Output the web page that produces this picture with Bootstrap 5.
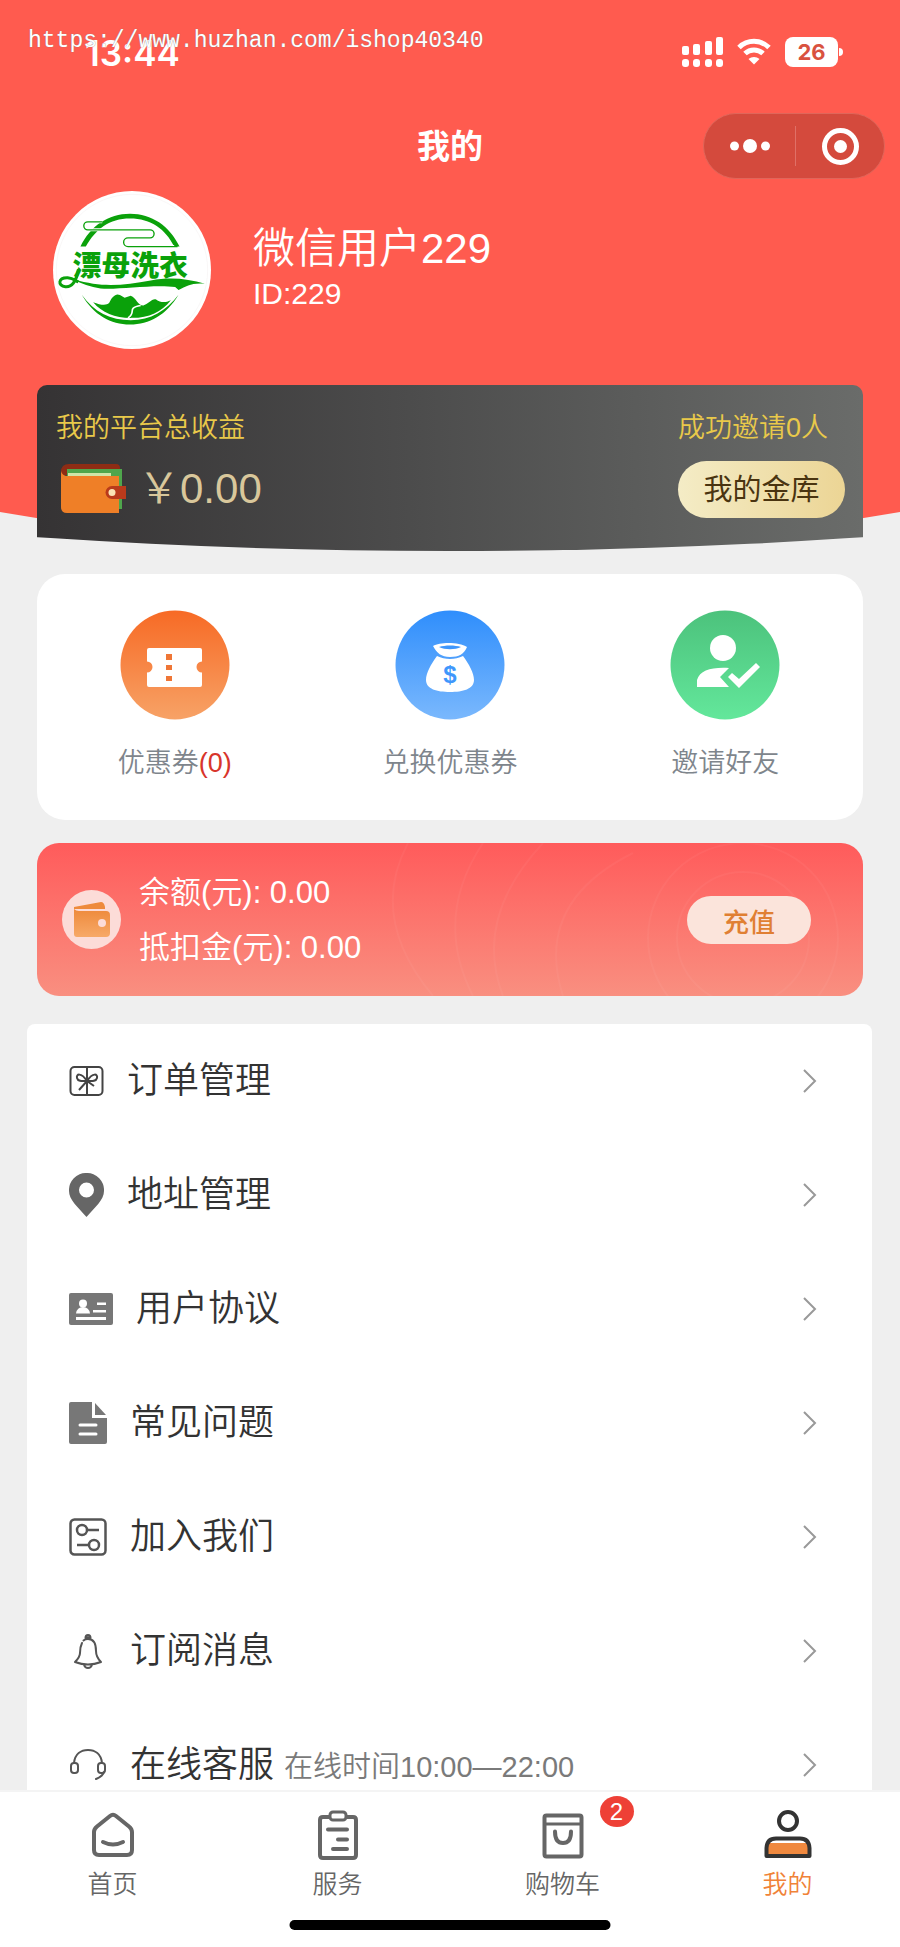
<!DOCTYPE html>
<html lang="zh-CN">
<head>
<meta charset="utf-8">
<meta name="viewport" content="width=device-width, initial-scale=1">
<title>我的</title>
<link href="https://cdn.jsdelivr.net/npm/bootstrap@5.3.0/dist/css/bootstrap.min.css" rel="stylesheet">
<style>
  :root { --brand: #ff5b4f; --page: #efefef; --ink: #333; --muted: #7e858c; --tab: #666; }
  body { background: var(--page); color: var(--ink); font-family: "Liberation Sans", "Noto Sans CJK SC", sans-serif; font-weight: 350; }
  svg { display: block; flex: none; }
  a { color: inherit; text-decoration: none; }
  .site-url { top: 27px; left: 28px; font: 23px/28px "Liberation Mono", monospace; text-shadow: 0 0 1px #777; z-index: 2; }

  .hero { background: var(--brand); padding-bottom: 201px; clip-path: ellipse(137% 100% at 50% 0); }
  .status { height: 103px; padding: 0 57px 0 85px; }
  .clock { font: 600 35px/40px Inter, sans-serif; padding-top: 2px; }
  .signals { gap: 14px; }
  .battery { width: 53px; height: 30px; border-radius: 8px; background: #fff; color: #d9523f; font: 700 22px/30px Inter, sans-serif; }
  .battery-tip { width: 4px; height: 8px; border-radius: 0 4px 4px 0; background: #fff; margin-left: 1px; }
  .topbar { height: 88px; }
  .topbar h1 { font-size: 33px; line-height: 40px; }
  .capsule { width: 182px; height: 66px; margin: 0 15px 2px 0; background: #d44a3d; border: 1px solid #e0665a; }
  .capsule button { border: 0; background: none; padding: 0; height: 64px; }
  .capsule hr { width: 1px; height: 40px; border: 0; background: #e07067; opacity: 1; }
  .profile { padding-left: 53px; gap: 42px; }
  .avatar { width: 158px; height: 158px; background: #fff; }
  .nick { font-size: 42px; line-height: 52px; }
  .uid { font-size: 30px; line-height: 38px; padding-bottom: 4px; }

  .stack { padding: 0 37px; margin-top: -165px; gap: 23px; }
  .vault { height: 166px; padding: 24px 18px 0 19px; border-radius: 10px 10px 0 0; background: linear-gradient(90deg, #353334, #4c4c4c 45%, #6a6c6a); clip-path: ellipse(125% 100% at 50% 0); color: #e9c94a; font-size: 27px; line-height: 38px; }
  .amount { font-size: 42px; line-height: 52px; color: #d9c79b; }
  .btn-vault { width: 167px; height: 57px; border: 0; border-radius: 29px; padding: 0; font-size: 29px; background: linear-gradient(90deg, #f4ecc6, #ecd595); color: #4a3410; font-weight: 400; margin-top: 14px; }
  .quick { height: 246px; border-radius: 28px; font-size: 27px; line-height: 36px; color: var(--muted); }
  .quick a { padding-top: 36px; gap: 25px; }
  .count { color: #d8352b; }
  .wallet { height: 153px; border-radius: 22px; padding: 0 52px 0 25px; background: linear-gradient(#ff5b5b, #f98f80); color: #fff; font-size: 31px; line-height: 55px; }
  .wallet-art { top: 0; right: 0; height: 153px; }
  .balances { margin-left: 18px; }
  .btn-topup { width: 124px; height: 48px; border: 0; border-radius: 24px; padding: 0; background: #fbe4db; color: #e07f33; font-size: 26px; font-weight: 500; }

  .menu { margin: 28px 28px 120px 27px; border-radius: 8px; background: #fff; }
  .menu a { height: 114px; padding: 0 55px 0 42px; font-size: 36px; background: none; color: var(--ink); border: 0; }
  .menu small { font-size: 29px; color: #7a7a7a; margin-left: 10px; }
  .menu .label { margin-left: 23px; }

  .tabs { background: #fff; border-top: 2px solid #f4f4f4; height: 157px; color: var(--tab); font-size: 25px; line-height: 32px; }
  .tabs a { padding-top: 18px; gap: 8px; }
  .tabs .here { color: #f08238; }
  .pip { top: 4px; left: calc(50% + 37px); width: 34px; height: 31px; background: #ee4036; color: #fff; font-size: 24px; line-height: 31px; }
  .home-bar { width: 321px; height: 10px; background: #000; bottom: 17px; }
</style>
<script src="https://cdn.jsdelivr.net/npm/bootstrap@5.3.0/dist/js/bootstrap.bundle.min.js"></script>
</head>
<body>
<div class="site-url position-absolute text-white">https://www.huzhan.com/ishop40340</div>

<header class="hero text-white">
  <div class="status d-flex align-items-center justify-content-between">
    <span class="clock">13:44</span>
    <div class="signals d-flex align-items-center">
      <svg width="41" height="30" fill="#fff"><rect x="0" y="9" width="7" height="9" rx="2"/><rect x="11" y="7" width="7" height="11" rx="2"/><rect x="23" y="4" width="7" height="14" rx="2"/><rect x="34" y="0" width="7" height="18" rx="2"/><rect x="0" y="22" width="7" height="8" rx="3"/><rect x="11" y="22" width="7" height="8" rx="3"/><rect x="23" y="22" width="7" height="8" rx="3"/><rect x="34" y="22" width="7" height="8" rx="3"/></svg>
      <svg width="34" height="27" fill="none" stroke="#fff" stroke-width="5"><path d="M2 9.500C10.500 1.300 23.500 1.300 32 9.500"/><path d="M8 15.500C13 10.700 21 10.700 26 15.500"/><path d="M17 26.500L11.500 21C14.500 18.200 19.500 18.200 22.500 21Z" fill="#fff" stroke="none"/></svg>
      <div class="d-flex align-items-center"><span class="battery text-center">26</span><span class="battery-tip"></span></div>
    </div>
  </div>
  <div class="topbar row g-0 align-items-center">
    <div class="col"></div>
    <h1 class="col-auto m-0 fw-bold">我的</h1>
    <div class="col d-flex justify-content-end">
      <div class="capsule rounded-pill d-flex align-items-center">
        <button class="flex-fill d-flex justify-content-center align-items-center" aria-label="更多"><svg width="40" height="14" fill="#fff"><circle cx="4.500" cy="7" r="4.500"/><circle cx="20" cy="7" r="7"/><circle cx="35.500" cy="7" r="4.500"/></svg></button>
        <hr class="m-0">
        <button class="flex-fill d-flex justify-content-center align-items-center" aria-label="关闭"><svg width="37" height="37"><circle cx="18.500" cy="18.500" r="16" fill="none" stroke="#fff" stroke-width="5"/><circle cx="18.500" cy="18.500" r="6.500" fill="#fff"/></svg></button>
      </div>
    </div>
  </div>
  <div class="profile d-flex align-items-center">
    <div class="avatar rounded-circle">
      <svg width="158" height="158" viewBox="38 34 472 472" fill="#0aa10a">
        <circle cx="274" cy="270" r="226" fill="none" stroke="#eee8e8" stroke-width="1"/>
        <path d="M120 200C150 138 203 102 268 102S386 138 416 200H400C375 148 330 116 268 116S165 148 136 200Z"/>
        <path d="M185 126H142a12 12 0 0 0 0 24H328a12 12 0 0 1 0 24H262a13 13 0 0 0 0 26H400" fill="none" stroke="#fff" stroke-width="9"/>
        <path d="M185 126H142a12 12 0 0 0 0 24H328a12 12 0 0 1 0 24H262a13 13 0 0 0 0 26H410" fill="none" stroke="#0aa10a" stroke-width="4"/>
        <text x="97" y="289" font-family="Noto Sans CJK SC" font-weight="900" font-size="86">漂母洗衣</text>
        <path d="M114 268C108 302 95 322 75 320C51 317 53 292 82 293C96 294 103 300 114 306" fill="none" stroke="#0aa10a" stroke-width="9"/>
        <path d="M100 298C190 325 250 315 330 301C390 290 440 296 492 311C450 308 438 318 413 330L403 321C340 312 230 330 180 325C150 321 122 312 100 298Z"/>
        <path d="M124 344C160 405 210 433 268 433S376 405 413 344C376 392 330 420 270 420S160 396 124 344Z"/>
        <path d="M158 366C180 374 196 378 206 368C214 350 226 338 238 345L252 353L270 347C288 354 290 376 308 376C322 372 334 354 346 358C360 368 374 368 390 360C362 396 325 412 275 413S185 398 158 366Z"/>
        <path d="M300 376C255 384 290 396 262 413" fill="none" stroke="#fff" stroke-width="5"/>
      </svg>
    </div>
    <div>
      <div class="nick">微信用户229</div>
      <div class="uid">ID:229</div>
    </div>
  </div>
</header>

<main>
  <div class="stack d-flex flex-column position-relative">
    <section class="vault d-flex justify-content-between">
      <div>
        <div>我的平台总收益</div>
        <div class="d-flex align-items-center pt-3 ps-1">
          <svg width="66" height="52"><path d="M1 9Q1 1 9 1H56Q60 1 60 5V12H1Z" fill="#8e2c14"/><path d="M7 6H62V46H7Z" fill="#4fa64c"/><path d="M8 10H51V14H8Z" fill="#cfe5a8"/><path d="M1 8Q2 13 8 13H59V50H7Q1 50 1 44Z" fill="#ef7f27"/><path d="M52 23H66V36H52A6.500 6.500 0 0 1 52 23Z" fill="#b93a1b"/><circle cx="52" cy="29.500" r="3.500" fill="#fbe3b4"/></svg>
          <span class="amount ms-2 ps-1">￥0.00</span>
        </div>
      </div>
      <div>
        <div>成功邀请0人</div>
        <button class="btn-vault">我的金库</button>
      </div>
    </section>

    <nav class="quick bg-white row g-0 text-center">
      <a href="#" class="col d-flex flex-column align-items-center">
        <svg width="110" height="110"><defs><linearGradient id="gO" x2="0" y2="1"><stop stop-color="#f76a25"/><stop offset="1" stop-color="#f7a266"/></linearGradient></defs><circle cx="55" cy="55" r="54.500" fill="url(#gO)"/><path d="M29 38H80a2 2 0 0 1 2 2V51.500a5.500 5.500 0 0 0 0 11V75a2 2 0 0 1-2 2H29a2 2 0 0 1-2-2V62.500a5.500 5.500 0 0 0 0-11V40a2 2 0 0 1 2-2Z" fill="#fff"/><path d="M46 44h6v6h-6zM46 55h6v5h-6zM46 66h6v5h-6z" fill="#ef7636"/></svg>
        <span>优惠券<span class="count">(0)</span></span>
      </a>
      <a href="#" class="col d-flex flex-column align-items-center">
        <svg width="110" height="110"><defs><linearGradient id="gB" x2="0" y2="1"><stop stop-color="#2f8efc"/><stop offset="1" stop-color="#7ab8fd"/></linearGradient></defs><circle cx="55" cy="55" r="54.500" fill="url(#gB)"/><path d="M38 36C45 32 64 32 72 37C69 44 64 47 55 47C46 47 42 43 38 36Z" fill="#fff"/><path d="M44 37C50 35 60 35 66 37C60 40 50 40 44 37Z" fill="#3f97fc"/><path d="M42 46C50 50 60 50 68 46C74 54 79 63 79 70C79 79 68 82 55 82S31 79 31 70C31 63 36 54 42 46Z" fill="#fff"/><text x="55" y="73" text-anchor="middle" font-family="Liberation Sans" font-weight="700" font-size="24" fill="#3f97fc">$</text></svg>
        <span>兑换优惠券</span>
      </a>
      <a href="#" class="col d-flex flex-column align-items-center">
        <svg width="110" height="110"><defs><linearGradient id="gG" x2="0" y2="1"><stop stop-color="#4cc27c"/><stop offset="1" stop-color="#63e79b"/></linearGradient></defs><circle cx="55" cy="55" r="54.500" fill="url(#gG)"/><g fill="#fff"><circle cx="53" cy="38" r="13"/><path d="M27 77V70C30 60 42 57 59 58L50 67L59 77Z"/><path d="M58 67L62 63L69 69L86 53L90 57L69 78Z"/></g></svg>
        <span>邀请好友</span>
      </a>
    </nav>

    <section class="wallet d-flex align-items-center position-relative overflow-hidden">
      <svg class="wallet-art position-absolute" width="520" height="153" fill="none" stroke="#fff" stroke-opacity=".04" stroke-width="2"><path d="M65 0Q25 75 90 153M140 0Q90 75 130 153M200 0Q130 75 160 153M290 10Q190 60 220 153"/><circle cx="400" cy="95" r="66"/><circle cx="400" cy="95" r="95"/></svg>
      <svg width="59" height="59"><defs><linearGradient id="gW" x2="0" y2="1"><stop stop-color="#ee8a3c"/><stop offset="1" stop-color="#f7a968"/></linearGradient></defs><circle cx="29.500" cy="29.500" r="29.500" fill="#fcdcd8"/><path d="M12 17L39 12Q42 12 43 17L43 19H12Z" fill="#ee8a3c"/><path d="M12 19Q14 21 17 21H44Q48 21 48 25V43Q48 47 44 47H15Q12 47 12 44Z" fill="url(#gW)"/><circle cx="40" cy="33" r="4" fill="#fcdcd8"/></svg>
      <div class="balances flex-fill">
        <div>余额(元): 0.00</div>
        <div>抵扣金(元): 0.00</div>
      </div>
      <button class="btn-topup position-relative">充值</button>
    </section>
  </div>

  <nav class="menu list-group list-group-flush">
    <a href="#" class="list-group-item d-flex align-items-center">
      <svg width="35" height="34" viewBox="0 0 35 34" fill="none" stroke="#444" stroke-width="2"><rect x="1.500" y="3" width="32" height="28" rx="4"/><path d="M18 3V31M18 17C12 8 7 10 8 14S14 17 18 17C24 8 29 10 28 14S22 17 18 17L10 26M18 17L25 22"/></svg>
      <span class="label flex-fill">订单管理</span>
      <svg width="15" height="26" fill="none" stroke="#999" stroke-width="2"><path d="M2 2L13 13L2 24"/></svg>
    </a>
    <a href="#" class="list-group-item d-flex align-items-center">
      <svg width="35" height="44" viewBox="0 0 35 44"><path fill-rule="evenodd" d="M17.500 0A17 17 0 0 1 35 18C35 27 26 34 17.500 44C9 34 0 27 0 18A17 17 0 0 1 17.500 0ZM17.500 9.500a7.500 7.500 0 1 0 0 15a7.500 7.500 0 1 0 0-15Z" fill="#666"/></svg>
      <span class="label flex-fill">地址管理</span>
      <svg width="15" height="26" fill="none" stroke="#999" stroke-width="2"><path d="M2 2L13 13L2 24"/></svg>
    </a>
    <a href="#" class="list-group-item d-flex align-items-center">
      <svg width="44" height="32"><rect width="44" height="32" rx="2" fill="#777"/><g fill="#fff"><circle cx="14" cy="10.500" r="4"/><path d="M7 20.500Q8 14 14 14T21 20.500ZM28 9.500h9v2.500h-9zM24 17h13v2.500H24zM7 24h30v3H7z"/></g></svg>
      <span class="label flex-fill">用户协议</span>
      <svg width="15" height="26" fill="none" stroke="#999" stroke-width="2"><path d="M2 2L13 13L2 24"/></svg>
    </a>
    <a href="#" class="list-group-item d-flex align-items-center">
      <svg width="38" height="42"><path d="M2 0H23V16H38V40Q38 42 36 42H2Q0 42 0 40V2Q0 0 2 0Z" fill="#777"/><path d="M26 1L37 13H26Z" fill="#777"/><path d="M11 23H27M11 32H27" stroke="#fff" stroke-width="3" stroke-linecap="round"/></svg>
      <span class="label flex-fill">常见问题</span>
      <svg width="15" height="26" fill="none" stroke="#999" stroke-width="2"><path d="M2 2L13 13L2 24"/></svg>
    </a>
    <a href="#" class="list-group-item d-flex align-items-center">
      <svg width="38" height="38" fill="none" stroke="#555" stroke-width="2.500"><rect x="1.500" y="1.500" width="35" height="35" rx="4"/><circle cx="13" cy="12" r="5"/><path d="M18 12H30M8 27H20"/><circle cx="25" cy="27" r="5"/></svg>
      <span class="label flex-fill">加入我们</span>
      <svg width="15" height="26" fill="none" stroke="#999" stroke-width="2"><path d="M2 2L13 13L2 24"/></svg>
    </a>
    <a href="#" class="list-group-item d-flex align-items-center">
      <svg width="38" height="36" fill="none" stroke="#555" stroke-width="2" stroke-linecap="round" stroke-linejoin="round"><path d="M13 10Q11 14 11 20Q11 24 6 29Q19 34 32 29Q27 24 27 18Q27 6 19 6Q16 6 14.500 7.500M15 32Q16 35 19 35T23 32"/><path d="M16.500 5Q16.500 2 19 2T21.500 5Z" fill="#777"/></svg>
      <span class="label flex-fill">订阅消息</span>
      <svg width="15" height="26" fill="none" stroke="#999" stroke-width="2"><path d="M2 2L13 13L2 24"/></svg>
    </a>
    <a href="#" class="list-group-item d-flex align-items-center">
      <svg width="38" height="34" fill="none" stroke="#555" stroke-width="2" stroke-linecap="round"><path d="M5 15C6 6 12 2 19 2S32 6 33 15M35 24Q34 28 27 31"/><rect x="2" y="15" width="7" height="10" rx="3"/><rect x="29" y="15" width="7" height="10" rx="3"/></svg>
      <span class="label flex-fill">在线客服<small>在线时间10:00—22:00</small></span>
      <svg width="15" height="26" fill="none" stroke="#999" stroke-width="2"><path d="M2 2L13 13L2 24"/></svg>
    </a>
  </nav>
</main>

<nav class="tabs fixed-bottom row g-0 text-center">
  <a href="#" class="col d-flex flex-column align-items-center">
    <svg width="50" height="50" fill="none" stroke="#666" stroke-width="4" stroke-linecap="round" stroke-linejoin="round"><path d="M22 6Q25 3.500 28 6L41 16.500Q44 19 44 22V40Q44 45 39 45H11Q6 45 6 40V22Q6 19 9 16.500Z"/><path d="M15 32Q25 37 35 32"/></svg>
    <span>首页</span>
  </a>
  <a href="#" class="col d-flex flex-column align-items-center">
    <svg width="50" height="50" fill="none" stroke="#666" stroke-width="4" stroke-linecap="round" stroke-linejoin="round"><path d="M16 7H10Q7 7 7 10V45Q7 48 10 48H40Q43 48 43 45V10Q43 7 40 7H34"/><rect x="17" y="2" width="16" height="8" rx="3" stroke-width="3"/><path d="M15 19.500H34M25 29.500H34M20 39H34"/></svg>
    <span>服务</span>
  </a>
  <a href="#" class="col d-flex flex-column align-items-center position-relative">
    <svg width="50" height="50" fill="none" stroke="#666" stroke-width="4" stroke-linecap="round" stroke-linejoin="round"><rect x="6.500" y="5.500" width="37" height="41" rx="2"/><path d="M6.500 14H43.500" stroke-width="3"/><path d="M17 21.500Q17 33 25 33T33 21.500"/></svg>
    <span>购物车</span>
    <span class="pip rounded-circle position-absolute">2</span>
  </a>
  <a href="#" class="here col d-flex flex-column align-items-center" aria-current="page">
    <svg width="50" height="50"><path d="M5 33H45V46H5Z" fill="#f0893f"/><g fill="none" stroke="#333" stroke-width="4" stroke-linejoin="round"><circle cx="25" cy="11" r="9"/><path d="M3.500 46V38Q4 28.500 13 28.500H37Q46 28.500 46.500 38V46Z"/></g></svg>
    <span>我的</span>
  </a>
  <div class="home-bar rounded-pill position-absolute start-50 translate-middle-x"></div>
</nav>
</body>
</html>
